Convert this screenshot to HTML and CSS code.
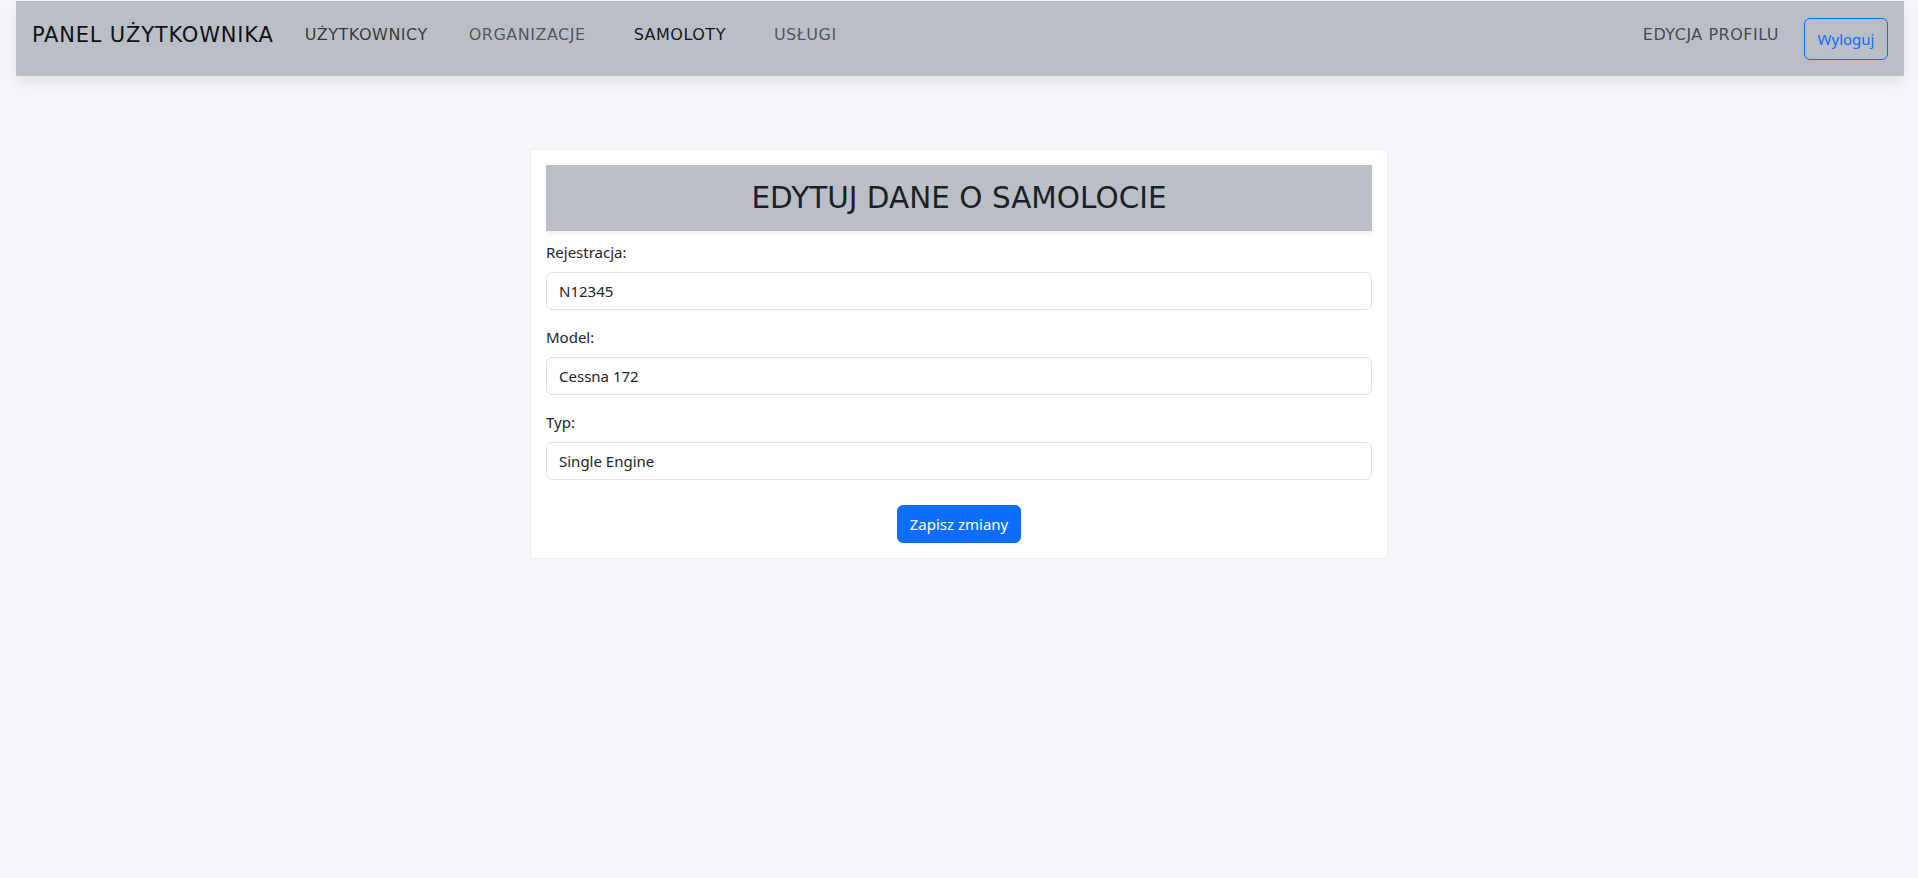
FILE: index.html
```html
<!DOCTYPE html>
<html lang="pl">
<head>
<meta charset="utf-8">
<title>Panel użytkownika</title>
<link rel="stylesheet" href="styles.css">
</head>
<body>
<nav class="navbar">
  <a class="brand" href="#">PANEL UŻYTKOWNIKA</a>
  <ul class="nav-links">
    <li><a class="nav-link hover" href="#">UŻYTKOWNICY</a></li>
    <li><a class="nav-link" href="#">ORGANIZACJE</a></li>
    <li class="wide"><a class="nav-link active" href="#">SAMOLOTY</a></li>
    <li class="wide"><a class="nav-link" href="#">USŁUGI</a></li>
  </ul>
  <div class="nav-right">
    <a class="nav-link profile" href="#">EDYCJA PROFILU</a>
    <button class="btn-outline" type="button">Wyloguj</button>
  </div>
</nav>
<main class="main">
  <section class="card">
    <h2 class="card-title">EDYTUJ DANE O SAMOLOCIE</h2>
    <form class="form">
      <div class="group">
        <label class="label" for="rej">Rejestracja:</label>
        <input class="input" id="rej" type="text" value="N12345">
      </div>
      <div class="group">
        <label class="label" for="model">Model:</label>
        <input class="input" id="model" type="text" value="Cessna 172">
      </div>
      <div class="group">
        <label class="label" for="typ">Typ:</label>
        <input class="input" id="typ" type="text" value="Single Engine">
      </div>
      <div class="actions">
        <button class="btn-primary" type="submit">Zapisz zmiany</button>
      </div>
    </form>
  </section>
</main>
</body>
</html>
```
FILE: styles.css
```css
* { box-sizing: border-box; }
html, body { margin: 0; padding: 0; }
body {
  background: #f5f6fa;
  font-family: "Noto Sans", "Open Sans", sans-serif;
  font-size: 16px;
  color: #212529;
  min-height: 878px;
}
.navbar {
  margin: 1px 14px 0 16px;
  height: 75px;
  background: #babfc7;
  display: flex;
  align-items: center;
  padding: 0 16px;
  box-shadow: 0 6px 12px rgba(0, 0, 0, 0.08);
}
.brand {
  font-family: "DejaVu Sans", sans-serif;
  font-size: 21px;
  font-weight: 400;
  color: #111;
  text-decoration: none;
  margin-top: -8px;
  letter-spacing: 0.8px;
}
.nav-links {
  list-style: none;
  margin: 0 0 0 31px;
  padding: 0;
  display: flex;
  gap: 41px;
}
.nav-links .wide { margin-left: 7px; }
.nav-link {
  font-family: "DejaVu Sans", sans-serif;
  font-size: 16px;
  letter-spacing: 0.5px;
  color: rgba(0, 0, 0, 0.58);
  text-decoration: none;
  display: block;
  margin-top: -8px;
}
.nav-link.hover { color: rgba(0, 0, 0, 0.72); }
.nav-link.active { color: rgba(0, 0, 0, 0.9); }
.nav-right {
  margin-left: auto;
  display: flex;
  align-items: center;
  gap: 25px;
}
.nav-link.profile { color: rgba(0, 0, 0, 0.65); }
.btn-outline {
  font-family: "Noto Sans", sans-serif;
  font-size: 15px;
  color: #0d6efd;
  background: transparent;
  border: 1px solid #0d6efd;
  border-radius: 6px;
  height: 42px;
  width: 84px;
  padding: 0;
}
.main {
  display: flex;
  justify-content: center;
  padding-top: 73px;
}
.card {
  width: 858px;
  background: #fff;
  border: 1px solid #eceef2;
  border-radius: 4px;
  padding: 15px;
}
.card-title {
  margin: 0 0 9px 0;
  height: 66px;
  background: #babfc7;
  display: flex;
  align-items: center;
  justify-content: center;
  font-family: "DejaVu Sans", sans-serif;
  font-weight: 400;
  font-size: 29.5px;
  color: #1c1f23;
  box-shadow: 0 3px 4px rgba(0, 0, 0, 0.06);
}
.group {
  display: flex;
  flex-direction: column;
  margin-bottom: 15px;
}
.label {
  font-size: 15px;
  line-height: 24px;
  margin-bottom: 8px;
  color: #212529;
}
.input {
  height: 38px;
  width: 100%;
  border: 1px solid #dee2e6;
  border-radius: 6px;
  padding: 0 12px;
  font-family: "Noto Sans", sans-serif;
  font-size: 15px;
  color: #212529;
  background: #fff;
}
.actions {
  display: flex;
  justify-content: center;
  margin-top: 25px;
}
.btn-primary {
  height: 38px;
  width: 124px;
  padding: 0;
  background: #0d6efd;
  color: #fff;
  border: 1px solid #0d6efd;
  border-radius: 6px;
  font-family: "Noto Sans", sans-serif;
  font-size: 15px;
}
```
